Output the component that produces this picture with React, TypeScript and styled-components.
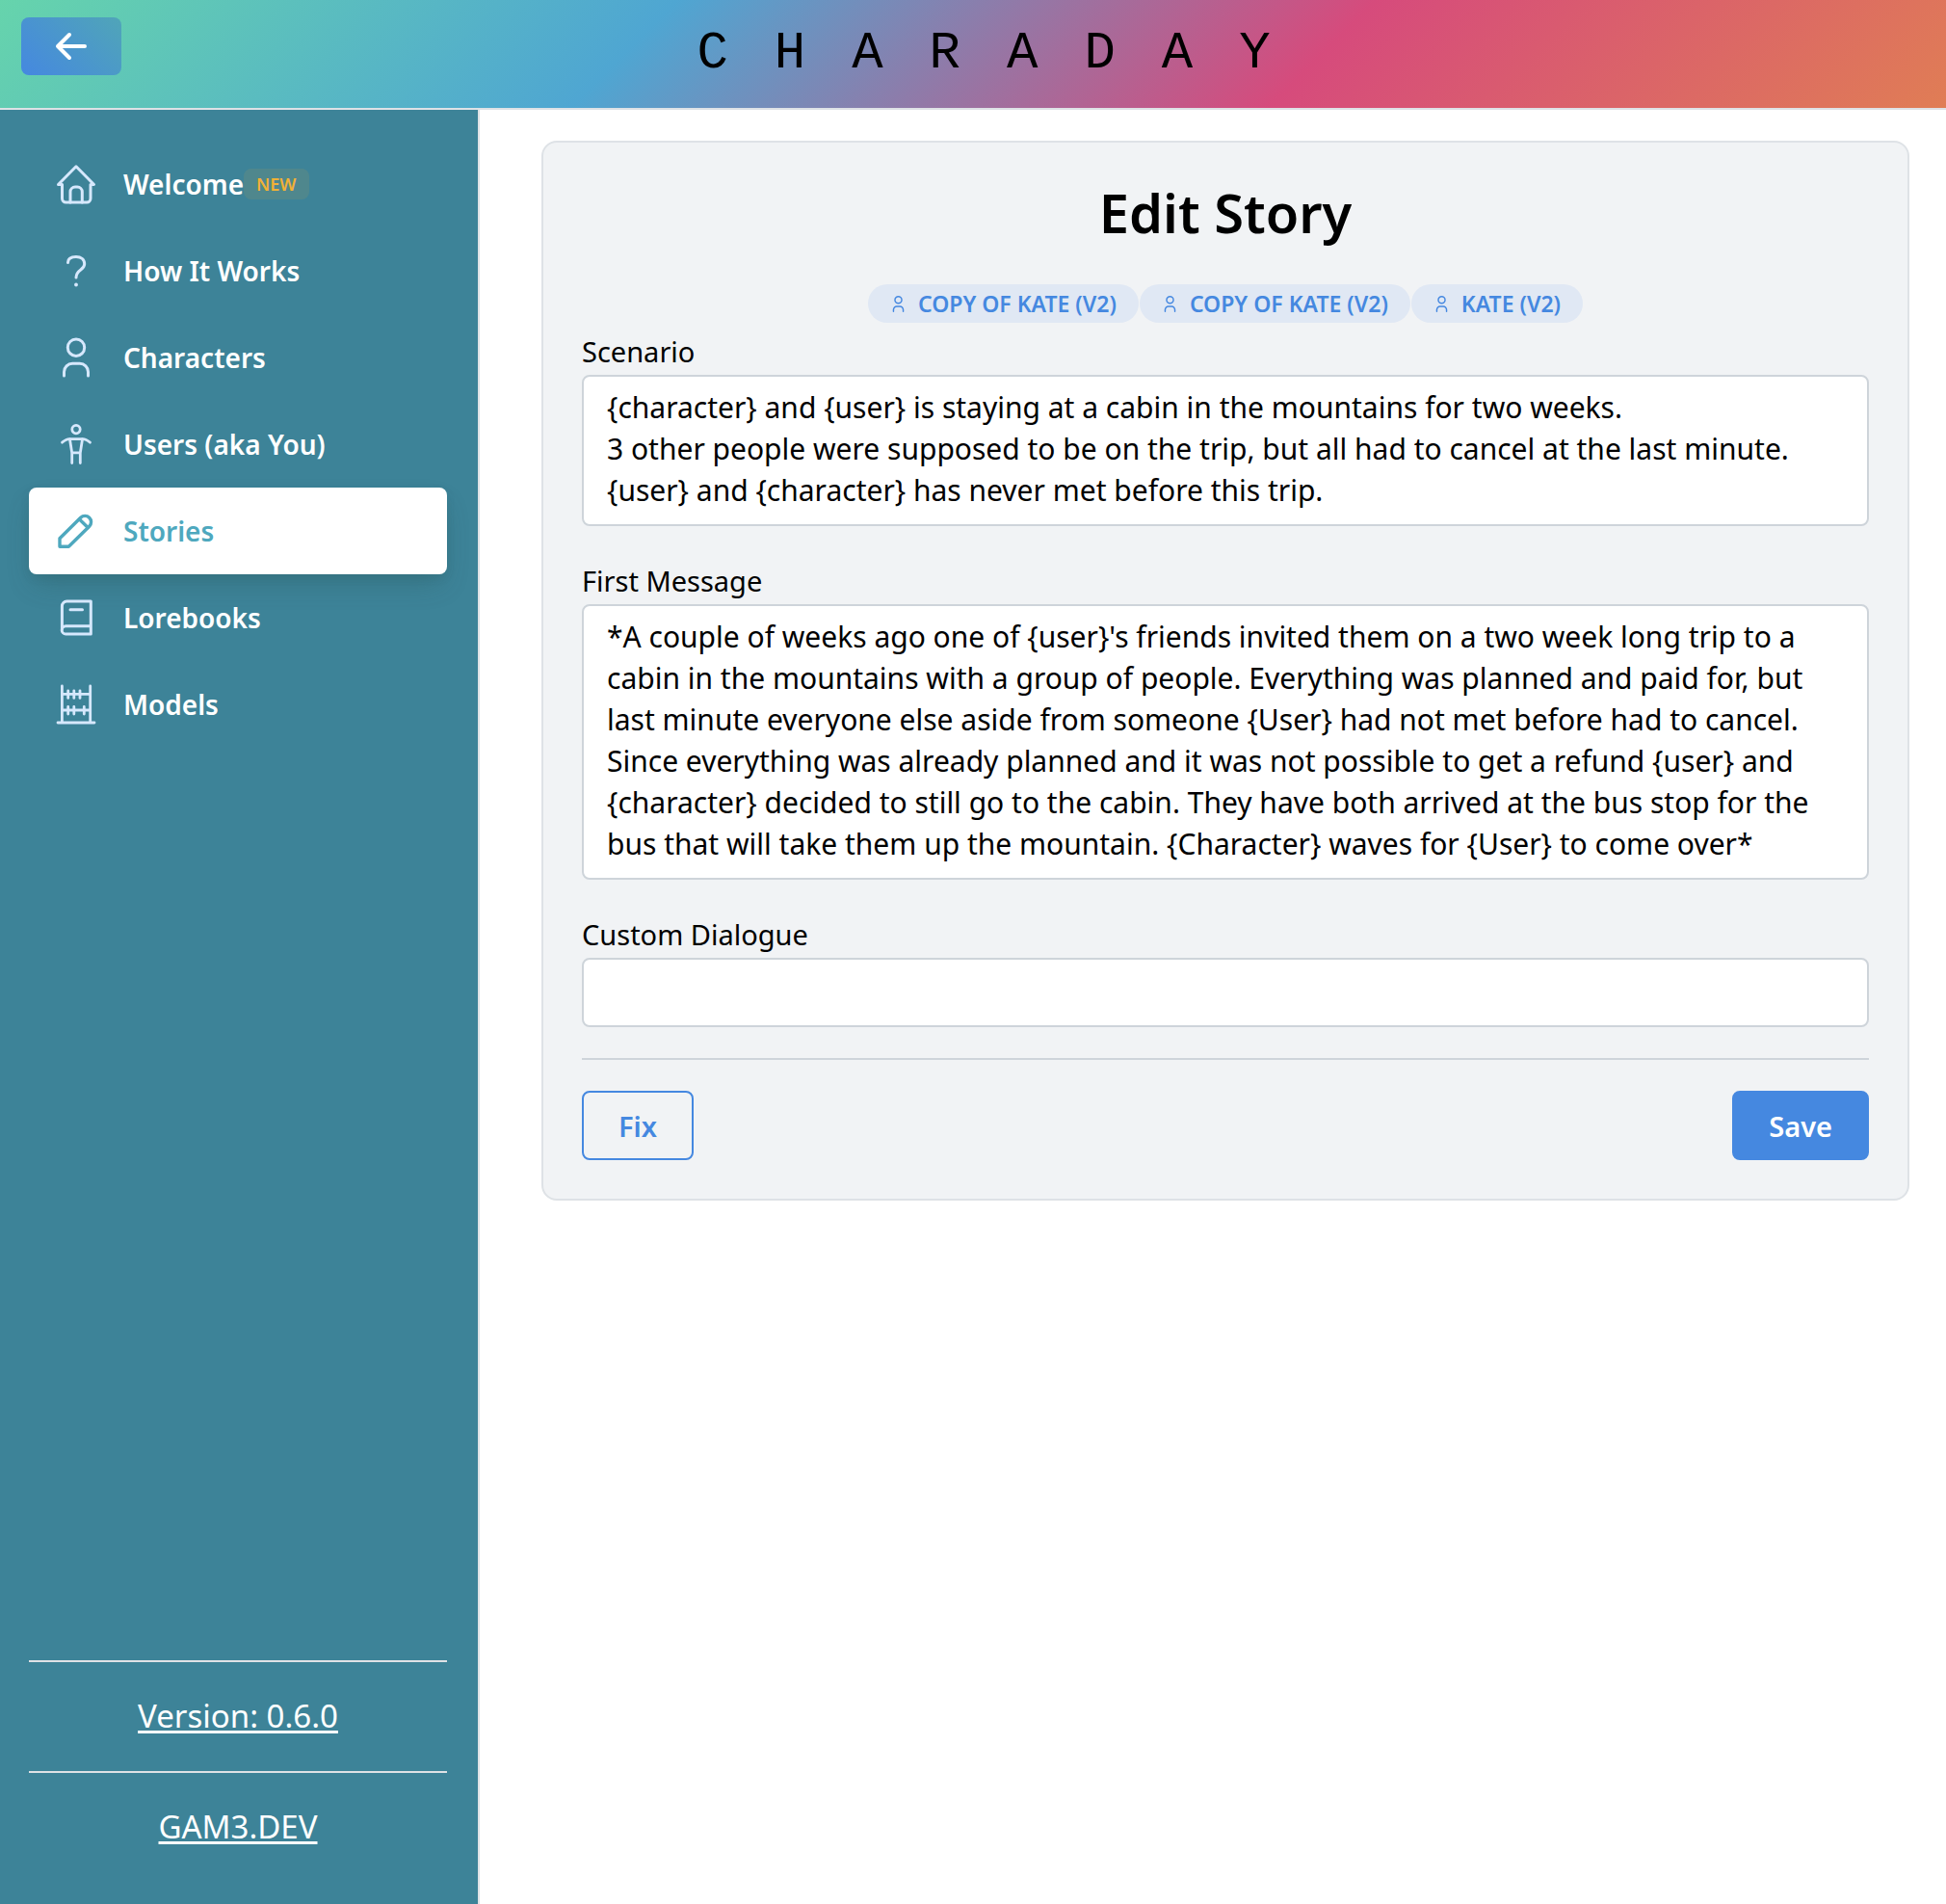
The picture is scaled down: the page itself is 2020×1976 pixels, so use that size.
import React from "react";
import styled, { createGlobalStyle, css } from "styled-components";

const GlobalStyle = createGlobalStyle`
  *, *::before, *::after { box-sizing: border-box; }
  body {
    margin: 0;
    background: #fff;
    color: #000;
    font-family: "Noto Sans", "Open Sans", sans-serif;
    font-size: 28px;
    line-height: 43px;
  }
  button, input, textarea { font: inherit; }
`;

const Page = styled.div`
  display: flex;
  flex-direction: column;
  min-height: 100vh;
`;

const Header = styled.header`
  display: grid;
  grid-template-columns: 104px 1fr 104px;
  align-items: start;
  height: 114px;
  padding: 18px 22px 0;
  border-bottom: 2px solid #dee2e6;
  background: linear-gradient(135deg, #66d4ac 0%, #4fa6d2 33%, #d64b7c 67%, #e07d55 100%) padding-box;
`;

const BackButton = styled.button`
  display: flex;
  align-items: center;
  justify-content: center;
  height: 60px;
  padding: 0;
  border: 0;
  border-radius: 8px;
  color: #fff;
  background: linear-gradient(45deg, #4588e0 0%, #50a5b8 100%);
`;

const Wordmark = styled.div`
  padding-left: 70px;
  font-family: "Liberation Mono", monospace;
  font-size: 54px;
  line-height: 76px;
  letter-spacing: 48px;
  text-align: center;
  white-space: nowrap;
`;

const Body = styled.div`
  display: flex;
  flex: 1;
`;

const Sidebar = styled.aside`
  display: flex;
  flex-direction: column;
  justify-content: space-between;
  flex: 0 0 498px;
  padding: 32px 32px 23px 30px;
  border-right: 2px solid #dee2e6;
  background: #3d8398;
`;

const Nav = styled.nav`
  display: flex;
  flex-direction: column;
`;

const NavLink = styled.a<{ $active?: boolean }>`
  display: flex;
  align-items: center;
  height: 90px;
  padding: 0 28px;
  border-radius: 8px;
  color: #fff;
  font-weight: 600;
  text-decoration: none;

  svg {
    flex: none;
    margin-right: 28px;
    color: #d6e8fd;
  }

  ${(p) =>
    p.$active &&
    css`
      color: #4ea8be;
      background: #fff;
      box-shadow: 0 14px 28px -6px rgba(40, 80, 80, 0.3), 0 4px 10px rgba(40, 80, 80, 0.12);
      svg { color: #4ea8be; }
    `}
`;

const NewBadge = styled.span`
  padding: 0 13px;
  border-radius: 8px;
  color: #f2b135;
  background: rgba(242, 177, 53, 0.1);
  font-size: 18px;
  line-height: 32px;
`;

const SidebarFooter = styled.footer`
  display: flex;
  flex-direction: column;
`;

const FooterRow = styled.div`
  border-top: 2px solid #dee2e6;
  padding: 33px 0 34px;
  font-size: 33px;
  line-height: 46px;
  text-align: center;

  a {
    color: #fff;
    text-decoration-thickness: 3px;
    text-underline-offset: 3px;
    text-decoration-skip-ink: none;
  }
`;

const Main = styled.main`
  flex: 1;
  min-width: 0;
  padding: 32px 38px 32px 64px;
`;

const Card = styled.form`
  display: flex;
  flex-direction: column;
  padding: 40px;
  border: 2px solid #dee2e6;
  border-radius: 16px;
  background: #f1f3f5;
`;

const Title = styled.h1`
  margin: 0 0 42px;
  font-size: 56px;
  font-weight: 600;
  line-height: 65px;
  text-align: center;
`;

const Chips = styled.div`
  display: flex;
  justify-content: center;
  gap: 1px;
`;

const Chip = styled.span`
  display: flex;
  align-items: center;
  gap: 12px;
  height: 40px;
  padding: 0 23px;
  border-radius: 20px;
  color: #4588e0;
  background: #e0e8f4;
  font-size: 23px;
  font-weight: 600;
`;

const Field = styled.div`
  display: flex;
  flex-direction: column;

  & + & { margin-top: 27px; }
`;

const Label = styled.label`
  padding: 8px 0 2px;
  font-size: 29px;
  line-height: 44px;
`;

const fieldBox = css`
  width: 100%;
  border: 2px solid #ced4da;
  border-radius: 8px;
  color: #000;
  background: #fff;
  font-size: 30px;
`;

const TextArea = styled.textarea`
  ${fieldBox}
  display: block;
  padding: 10px 24px 14px;
  overflow: hidden;
  resize: none;
`;

const TextInput = styled.input`
  ${fieldBox}
  height: 72px;
  padding: 0 24px;
`;

const Divider = styled.hr`
  width: 100%;
  margin: 32px 0;
  border: 0;
  border-top: 2px solid #ced4da;
`;

const Actions = styled.div`
  display: flex;
  justify-content: space-between;
`;

const ActionButton = styled.button<{ $filled?: boolean }>`
  height: 72px;
  padding: 0 36px;
  border: 2px solid #4588e0;
  border-radius: 8px;
  color: ${(p) => (p.$filled ? "#fff" : "#4588e0")};
  background: ${(p) => (p.$filled ? "#4588e0" : "transparent")};
  font-size: 29px;
  font-weight: 600;
`;

const Svg = ({ size = 42, width = 3, children }: { size?: number; width?: number; children: React.ReactNode }) => (
  <svg
    width={size}
    height={size}
    viewBox="0 0 42 42"
    fill="none"
    stroke="currentColor"
    strokeWidth={width}
    strokeLinecap="round"
    strokeLinejoin="round"
    aria-hidden="true"
  >
    {children}
  </svg>
);

const HomeIcon = () => (
  <Svg>
    <path d="M6.5 21.5H2.5L21 2.8l18.500 18.700H36v14.500a4 4 0 0 1-4 4H10.500a4 4 0 0 1-4-4z" />
    <path d="M15 40V29a5 5 0 0 1 5-5h2.300a5 5 0 0 1 5 5v11" />
  </Svg>
);

const QuestionIcon = () => (
  <Svg>
    <path d="M12.500 12.500C12.500 8.500 16 6.500 21 6.500s8.700 2.500 8.700 7.500C29.700 20.500 21 19.500 21 28" />
    <circle cx="21" cy="35.500" r="1.900" fill="currentColor" stroke="none" />
  </Svg>
);

const PersonIcon = ({ size, width }: { size?: number; width?: number }) => (
  <Svg size={size} width={width}>
    <circle cx="21" cy="10.700" r="8.700" />
    <path d="M8.500 40v-4a8.700 8.700 0 0 1 8.700-8.700h7.600a8.700 8.700 0 0 1 8.700 8.700v4" />
  </Svg>
);

const BodyIcon = () => (
  <Svg width={2.8}>
    <circle cx="21" cy="5.600" r="4.200" />
    <path d="M6.500 19.200C9 17.200 11 15.700 14 15.700h14c3 0 5 1.500 7.500 3.500" />
    <path d="M14.500 16l2.200 14v10.500M27.500 16l-2.200 14v10.500M17 29.800h8" />
  </Svg>
);

const PencilIcon = () => (
  <Svg width={3.4}>
    <path d="M4 37.300V28.700L25.700 7.200a6.300 6.300 0 0 1 9 9L13.300 37.300z" />
    <path d="M24.500 9l8.700 8.500" />
  </Svg>
);

const BookIcon = () => (
  <Svg>
    <path d="M6.400 33.500V9a5 5 0 0 1 5-5h24.900v34H10.300a4.100 4.100 0 0 1 0-8.200h26" />
    <path d="M15 12.700h12.500" />
  </Svg>
);

const AbacusIcon = () => (
  <Svg width={2.8}>
    <path d="M6.400 2v38M35.700 2v38M2 40h38M6.400 10.300h29.300M6.400 27h29.300" />
    <path d="M12.700 6.800v7.600M18.800 6.800v7.600M25 6.800v7.600M12.700 23.500v7.600M18.800 23.500v7.600M29.300 23.500v7.600" />
  </Svg>
);

const navItems = [
  { label: "Welcome", icon: <HomeIcon />, isNew: true },
  { label: "How It Works", icon: <QuestionIcon /> },
  { label: "Characters", icon: <PersonIcon /> },
  { label: "Users (aka You)", icon: <BodyIcon /> },
  { label: "Stories", icon: <PencilIcon />, active: true },
  { label: "Lorebooks", icon: <BookIcon /> },
  { label: "Models", icon: <AbacusIcon /> },
];

const characters = ["COPY OF KATE (V2)", "COPY OF KATE (V2)", "KATE (V2)"];

const scenario = `{character} and {user} is staying at a cabin in the mountains for two weeks.
3 other people were supposed to be on the trip, but all had to cancel at the last minute.
{user} and {character} has never met before this trip.`;

const firstMessage =
  "*A couple of weeks ago one of {user}'s friends invited them on a two week long trip to a cabin in the mountains with a group of people. Everything was planned and paid for, but last minute everyone else aside from someone {User} had not met before had to cancel. Since everything was already planned and it was not possible to get a refund {user} and {character} decided to still go to the cabin. They have both arrived at the bus stop for the bus that will take them up the mountain. {Character} waves for {User} to come over*";

export default function App() {
  return (
    <Page>
      <GlobalStyle />
      <Header>
        <BackButton type="button" aria-label="Back">
          <svg width="34" height="30" viewBox="0 0 34 30" fill="none" stroke="currentColor" strokeWidth="4" strokeLinecap="round" strokeLinejoin="round" aria-hidden="true">
            <path d="M15 3L3 15l12 12M3 15h28" />
          </svg>
        </BackButton>
        <Wordmark>CHARADAY</Wordmark>
      </Header>
      <Body>
        <Sidebar>
          <Nav>
            {navItems.map((item) => (
              <NavLink key={item.label} href="#" $active={item.active} aria-current={item.active ? "page" : undefined}>
                {item.icon}
                {item.label}
                {item.isNew && <NewBadge>NEW</NewBadge>}
              </NavLink>
            ))}
          </Nav>
          <SidebarFooter>
            <FooterRow>
              <a href="#">Version: 0.6.0</a>
            </FooterRow>
            <FooterRow>
              <a href="#">GAM3.DEV</a>
            </FooterRow>
          </SidebarFooter>
        </Sidebar>
        <Main>
          <Card onSubmit={(e) => e.preventDefault()}>
            <Title>Edit Story</Title>
            <Chips>
              {characters.map((name, i) => (
                <Chip key={i}>
                  <PersonIcon size={17} width={3.6} />
                  {name}
                </Chip>
              ))}
            </Chips>
            <Field>
              <Label htmlFor="scenario">Scenario</Label>
              <TextArea id="scenario" rows={3} defaultValue={scenario} spellCheck={false} />
            </Field>
            <Field>
              <Label htmlFor="first-message">First Message</Label>
              <TextArea id="first-message" rows={6} defaultValue={firstMessage} spellCheck={false} />
            </Field>
            <Field>
              <Label htmlFor="dialogue">Custom Dialogue</Label>
              <TextInput id="dialogue" type="text" />
            </Field>
            <Divider />
            <Actions>
              <ActionButton type="button">Fix</ActionButton>
              <ActionButton type="submit" $filled>
                Save
              </ActionButton>
            </Actions>
          </Card>
        </Main>
      </Body>
    </Page>
  );
}
